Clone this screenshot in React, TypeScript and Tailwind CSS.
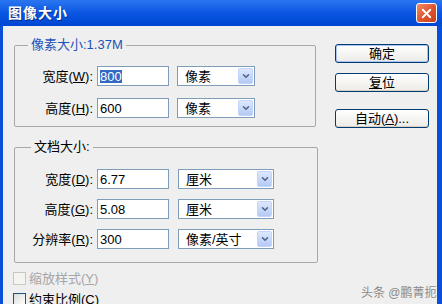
import { ChevronDown, X } from 'lucide-react'

const font = { fontFamily: '"Liberation Sans", "Noto Sans CJK SC", sans-serif' }

function Field({ label, hot, rest, value, selected }: { label: string; hot: string; rest: string; value: string; selected?: boolean }) {
  return (
    <div className="flex items-center h-[20px]">
      <label className="w-[80px] text-right text-[13px] text-black leading-none pr-[2px]">
        {label}(<span className="underline">{hot}</span>){rest}
      </label>
      <div className="ml-[2px] w-[72px] h-[20px] bg-white border border-[#7f9db9] flex items-center px-[2px] text-[13px] leading-none">
        {selected ? <span className="bg-[#316ac5] text-white">{value}</span> : <span>{value}</span>}
      </div>
    </div>
  )
}

function Select({ text, width }: { text: string; width: string }) {
  return (
    <div className={`${width} h-[20px] bg-white border border-[#7f9db9] flex items-center justify-between pl-[7px] pr-[1px] text-[13px] leading-none`}>
      <span>{text}</span>
      <span className="w-[15px] h-[16px] rounded-[2px] bg-gradient-to-b from-[#dce8fd] to-[#b4c9f5] border border-[#c3d3fd] flex items-center justify-center">
        <ChevronDown size={10} strokeWidth={3.5} className="text-[#4d6185]" />
      </span>
    </div>
  )
}

function Button({ children, primary }: { children: React.ReactNode; primary?: boolean }) {
  return (
    <button
      className={`w-[94px] h-[19px] rounded-[3px] border border-[#003c74] bg-gradient-to-b from-white to-[#ecebe6] text-[13px] leading-none text-black flex items-center justify-center ${
        primary ? 'shadow-[inset_0_0_0_1px_#a9c4f1]' : 'shadow-[inset_0_-1px_0_#d6d0c5]'
      }`}
    >
      {children}
    </button>
  )
}

export default function App() {
  return (
    <div className="w-[442px] h-[304px] overflow-hidden flex flex-col bg-[#efefef]" style={font}>
      {/* Title bar */}
      <div className="h-[26px] shrink-0 bg-gradient-to-b from-[#2a76f0] via-[#0a56e2] to-[#0046d2] flex items-center justify-between pl-[8px] pr-[5px]">
        <span className="text-white font-bold text-[14px] tracking-[1px] [text-shadow:1px_1px_0_#0a2a8a]">图像大小</span>
        <span className="w-[21px] h-[20px] rounded-[3px] border border-white bg-gradient-to-br from-[#f08a6a] via-[#e0572f] to-[#c6401c] flex items-center justify-center">
          <X size={15} strokeWidth={3} className="text-white" />
        </span>
      </div>

      {/* Body */}
      <div className="flex-1 flex border-l-[3px] border-r-[5px] border-[#0a4fd8] bg-[#efefef]">
        <div className="w-[316px] pl-[11px] flex flex-col">
          <fieldset className="mt-[11px] w-[302px] border border-[#a8a8a8] rounded-[2px] pb-[8px]">
            <legend className="ml-[13px] px-[3px] text-[13px] leading-[16px] text-[#1d52b8]">像素大小:1.37M</legend>
            <div className="mt-[13px] flex flex-col gap-[12px]">
              <div className="flex items-center gap-[8px]">
                <Field label="宽度" hot="W" rest=":" value="800" selected />
                <Select text="像素" width="w-[78px]" />
              </div>
              <div className="flex items-center gap-[8px]">
                <Field label="高度" hot="H" rest=":" value="600" />
                <Select text="像素" width="w-[78px]" />
              </div>
            </div>
          </fieldset>

          <fieldset className="mt-[12px] w-[304px] border border-[#a8a8a8] rounded-[2px] pb-[13px]">
            <legend className="ml-[16px] px-[3px] text-[13px] leading-[16px] text-black">文档大小:</legend>
            <div className="mt-[14px] flex flex-col gap-[10px]">
              <div className="flex items-center gap-[9px]">
                <Field label="宽度" hot="D" rest=":" value="6.77" />
                <Select text="厘米" width="w-[96px]" />
              </div>
              <div className="flex items-center gap-[9px]">
                <Field label="高度" hot="G" rest=":" value="5.08" />
                <Select text="厘米" width="w-[96px]" />
              </div>
              <div className="flex items-center gap-[9px]">
                <Field label="分辨率" hot="R" rest=":" value="300" />
                <Select text="像素/英寸" width="w-[96px]" />
              </div>
            </div>
          </fieldset>

          <div className="mt-[8px] flex items-center gap-[3px] h-[14px]">
            <span className="w-[13px] h-[13px] ml-[-1px] border border-[#cac8bb] bg-[#f4f4f0]" />
            <span className="text-[13px] leading-none text-[#a6a6a6]">
              缩放样式(<span className="underline">Y</span>)
            </span>
          </div>
          <div className="mt-[7px] flex items-center gap-[3px] h-[14px]">
            <span className="w-[13px] h-[13px] ml-[-1px] border border-[#1c5180] bg-gradient-to-br from-[#dcdcd7] to-white" />
            <span className="text-[13px] leading-none text-black">
              约束比例(<span className="underline">C</span>)
            </span>
          </div>
        </div>

        <div className="flex-1 flex flex-col pl-[16px] pt-[18px]">
          <Button primary>确定</Button>
          <div className="mt-[10px]">
            <Button>
              <span className="underline">复</span>位
            </Button>
          </div>
          <div className="mt-[17px]">
            <Button>
              自动(<span className="underline">A</span>)...
            </Button>
          </div>
          <div className="mt-auto mb-[7px] ml-[26px] text-[12px] text-[#8a8a8a] leading-none">头条 @鹏菁扼</div>
        </div>
      </div>
    </div>
  )
}
